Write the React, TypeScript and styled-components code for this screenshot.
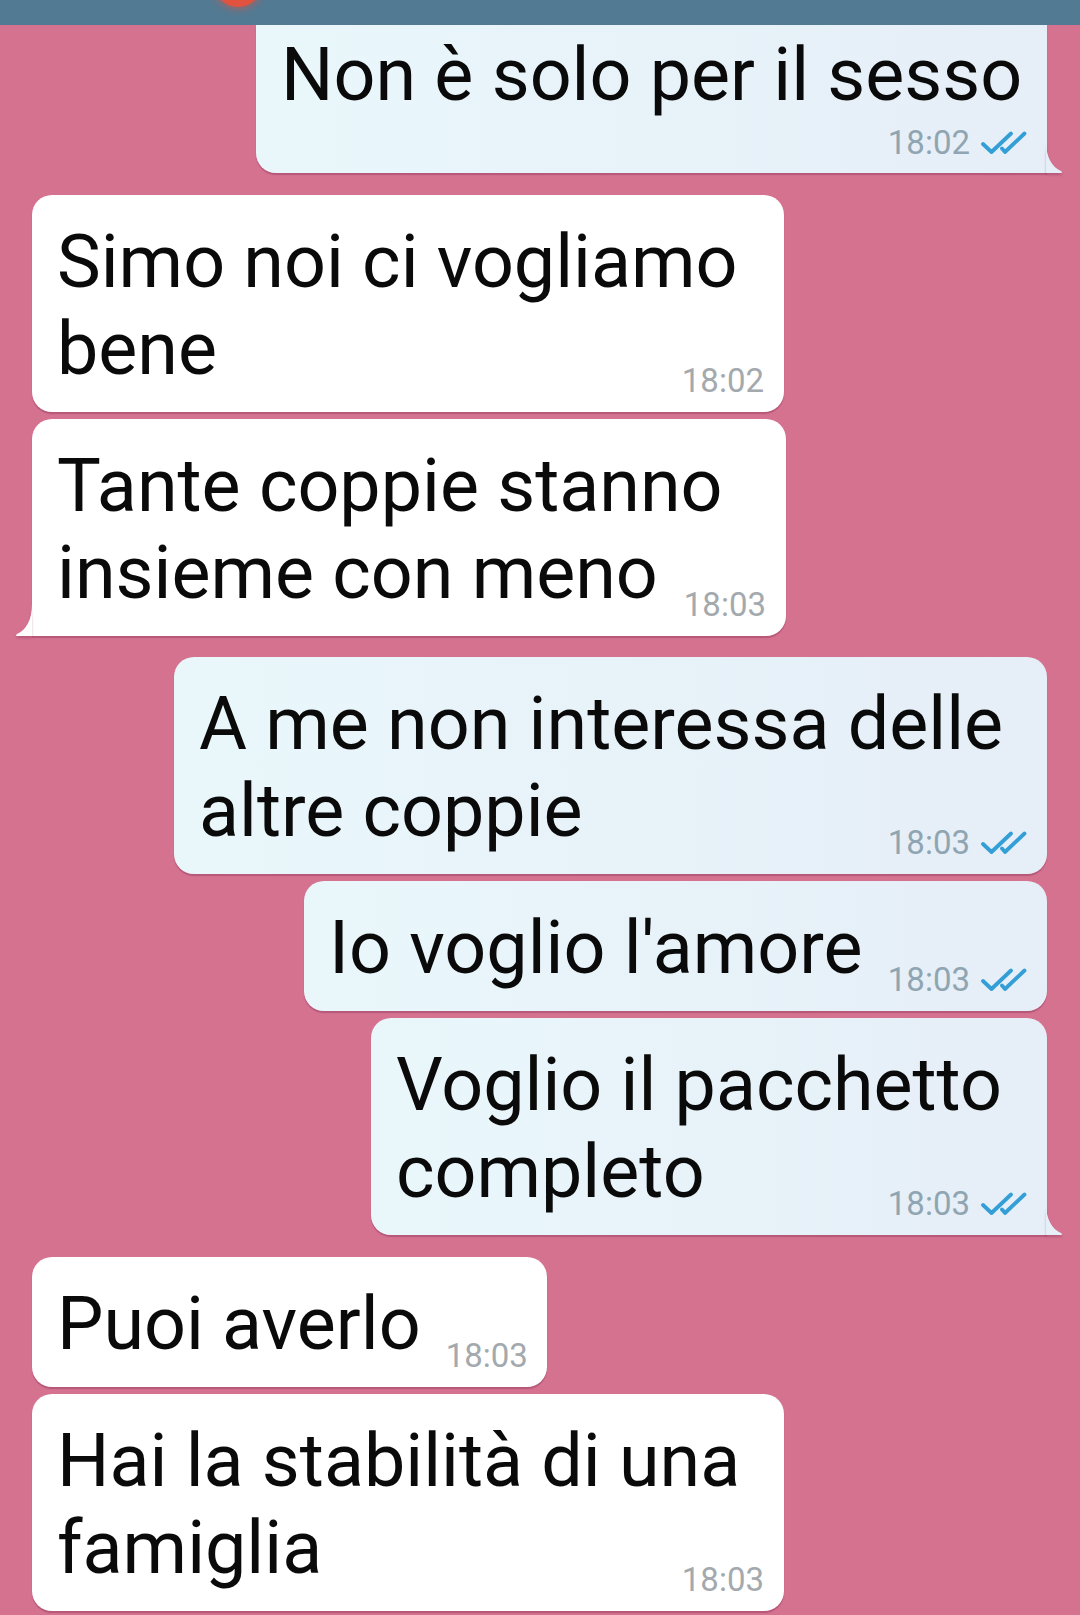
import React from 'react';
import styled, { createGlobalStyle } from 'styled-components';

const GlobalStyle = createGlobalStyle`
  html, body {
    margin: 0;
    padding: 0;
  }
  body {
    background: #d47290;
    font-family: Roboto, "Liberation Sans", sans-serif;
  }
`;

const Screen = styled.div`
  width: 1080px;
  height: 1615px;
  overflow: hidden;
  background: #d47290;
  display: flex;
  flex-direction: column;
`;

const TopBar = styled.div`
  height: 25px;
  flex-shrink: 0;
  background: #537a93;
  display: flex;
  padding-left: 214px;
  overflow: hidden;
`;

const Badge = styled.div`
  width: 48px;
  height: 48px;
  margin-top: -41px;
  border-radius: 50%;
  background: #e2533f;
  box-shadow: 0 0 6px 3px rgba(226, 83, 63, 0.45);
`;

const MessageList = styled.div`
  display: flex;
  flex-direction: column;
`;

const Row = styled.div<{ $out: boolean; $gap: number }>`
  display: flex;
  justify-content: ${({ $out }) => ($out ? 'flex-end' : 'flex-start')};
  padding: 0 33px 0 32px;
  margin-top: ${({ $gap }) => $gap}px;
`;

const Bubble = styled.div<{ $out: boolean; $width: number; $tail: boolean; $cropTop: boolean }>`
  position: relative;
  box-sizing: border-box;
  width: ${({ $width }) => $width}px;
  padding: ${({ $cropTop }) => ($cropTop ? '7px' : '24px')} 20px 19px 25px;
  background: ${({ $out }) =>
    $out ? 'linear-gradient(90deg, #e9f7fb 0%, #e6eef7 100%)' : '#ffffff'};
  border-radius: 20px;
  ${({ $cropTop }) => $cropTop && 'border-top-left-radius: 0; border-top-right-radius: 0;'}
  ${({ $tail, $out }) =>
    $tail && ($out ? 'border-bottom-right-radius: 0;' : 'border-bottom-left-radius: 0;')}
  box-shadow: 0 2px 1px rgba(120, 35, 70, 0.32);
`;

const Tail = styled.svg<{ $out: boolean }>`
  position: absolute;
  bottom: 0;
  ${({ $out }) => ($out ? 'right: -16px;' : 'left: -17px;')}
  width: 17px;
  height: 32px;
  filter: drop-shadow(0 2px 1px rgba(120, 35, 70, 0.32));
`;

const Line = styled.div`
  font-size: 73.6px;
  line-height: 87px;
  color: #0a0a0a;
  white-space: nowrap;
`;

const LastLine = styled(Line)`
  display: flex;
  align-items: flex-end;
  gap: 25px;
`;

const Meta = styled.div<{ $out: boolean }>`
  display: inline-flex;
  align-items: center;
  gap: 11px;
  margin-left: auto;
  font-size: 33px;
  line-height: 37px;
  color: ${({ $out }) => ($out ? '#8fa5b1' : '#a3a9ad')};
  white-space: nowrap;
`;

const InlineMeta = styled(Meta)`
  margin-bottom: -6px;
`;

const MetaRow = styled.div`
  display: flex;
  justify-content: flex-end;
  margin: 5px 0 -7px;
`;

const DoubleCheck: React.FC = () => (
  <svg width="46" height="24" viewBox="0 0 46 24" fill="none">
    <path
      d="M2 13 L10.5 21 L30 2.5"
      stroke="#339fd6"
      strokeWidth="3.8"
      strokeLinecap="round"
      strokeLinejoin="round"
    />
    <path
      d="M21 17.5 L24 21 L43.5 2.5"
      stroke="#339fd6"
      strokeWidth="3.8"
      strokeLinecap="round"
      strokeLinejoin="round"
    />
  </svg>
);

interface Message {
  out: boolean;
  lines: string[];
  time: string;
  width: number;
  gap: number;
  tail?: boolean;
  metaBelow?: boolean;
  cropTop?: boolean;
}

const messages: Message[] = [
  { out: true, lines: ['Non è solo per il sesso'], time: '18:02', width: 791, gap: 0, tail: true, metaBelow: true, cropTop: true },
  { out: false, lines: ['Simo noi ci vogliamo', 'bene'], time: '18:02', width: 752, gap: 22 },
  { out: false, lines: ['Tante coppie stanno', 'insieme con meno'], time: '18:03', width: 754, gap: 7, tail: true },
  { out: true, lines: ['A me non interessa delle', 'altre coppie'], time: '18:03', width: 873, gap: 21 },
  { out: true, lines: ["Io voglio l'amore"], time: '18:03', width: 743, gap: 7 },
  { out: true, lines: ['Voglio il pacchetto', 'completo'], time: '18:03', width: 676, gap: 7, tail: true },
  { out: false, lines: ['Puoi averlo'], time: '18:03', width: 515, gap: 22 },
  { out: false, lines: ['Hai la stabilità di una', 'famiglia'], time: '18:03', width: 752, gap: 7 },
];

const MessageBubble: React.FC<{ message: Message }> = ({ message }) => {
  const { out, lines, time, width, gap, tail, metaBelow, cropTop } = message;
  const head = lines.slice(0, -1);
  const last = lines[lines.length - 1];

  const meta = (
    <>
      <span>{time}</span>
      {out && <DoubleCheck />}
    </>
  );

  return (
    <Row $out={out} $gap={gap}>
      <Bubble $out={out} $width={width} $tail={!!tail} $cropTop={!!cropTop}>
        {head.map((text) => (
          <Line key={text}>{text}</Line>
        ))}
        {metaBelow ? (
          <>
            <Line>{last}</Line>
            <MetaRow>
              <Meta $out={out}>{meta}</Meta>
            </MetaRow>
          </>
        ) : (
          <LastLine>
            <span>{last}</span>
            <InlineMeta $out={out}>{meta}</InlineMeta>
          </LastLine>
        )}
        {tail && (
          <Tail $out={out} viewBox="0 0 17 32">
            {out ? (
              <path d="M0 0 C0 16 6 26 15 30 Q17 31.5 15 32 L0 32 Z" fill="#e6eef7" />
            ) : (
              <path d="M17 0 C17 16 11 26 2 30 Q0 31.5 2 32 L17 32 Z" fill="#ffffff" />
            )}
          </Tail>
        )}
      </Bubble>
    </Row>
  );
};

const App: React.FC = () => {
  return (
    <>
      <GlobalStyle />
      <Screen>
        <TopBar>
          <Badge />
        </TopBar>
        <MessageList>
          {messages.map((message, index) => (
            <MessageBubble key={index} message={message} />
          ))}
        </MessageList>
      </Screen>
    </>
  );
};

export default App;
